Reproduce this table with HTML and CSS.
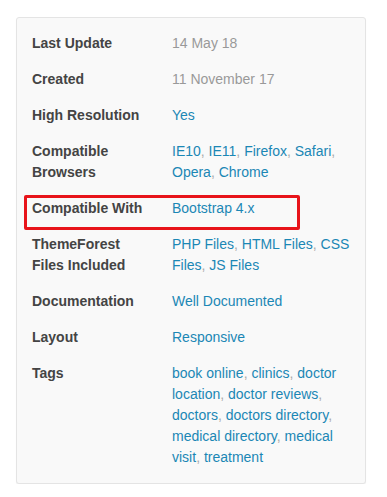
FILE: index.html
```html
<!DOCTYPE html>
<html lang="en">
<head>
  <meta charset="UTF-8" />
  <title>Item Details</title>
  <link rel="stylesheet" href="styles.css">
</head>
<body>

  <div class="meta-card">
    <div class="meta-row">
      <span class="meta-label">Last Update</span>
      <span class="meta-value muted">14 May 18</span>
    </div>
    <div class="meta-row">
      <span class="meta-label">Created</span>
      <span class="meta-value muted">11 November 17</span>
    </div>
    <div class="meta-row">
      <span class="meta-label">High Resolution</span>
      <span class="meta-value"><a href="#">Yes</a></span>
    </div>
    <div class="meta-row">
      <span class="meta-label">Compatible Browsers</span>
      <span class="meta-value"><a href="#">IE10</a>, <a href="#">IE11</a>, <a href="#">Firefox</a>, <a href="#">Safari</a>, <a href="#">Opera</a>, <a href="#">Chrome</a></span>
    </div>
    <div class="meta-row marked">
      <span class="meta-label">Compatible With</span>
      <span class="meta-value"><a href="#">Bootstrap 4.x</a></span>
    </div>
    <div class="meta-row">
      <span class="meta-label">ThemeForest Files Included</span>
      <span class="meta-value"><a href="#">PHP Files</a>, <a href="#">HTML Files</a>, <a href="#">CSS Files</a>, <a href="#">JS Files</a></span>
    </div>
    <div class="meta-row">
      <span class="meta-label">Documentation</span>
      <span class="meta-value"><a href="#">Well Documented</a></span>
    </div>
    <div class="meta-row">
      <span class="meta-label">Layout</span>
      <span class="meta-value"><a href="#">Responsive</a></span>
    </div>
    <div class="meta-row">
      <span class="meta-label">Tags</span>
      <span class="meta-value"><a href="#">book online</a>, <a href="#">clinics</a>, <a href="#">doctor location</a>, <a href="#">doctor reviews</a>, <a href="#">doctors</a>, <a href="#">doctors directory</a>, <a href="#">medical directory</a>, <a href="#">medical visit</a>, <a href="#">treatment</a></span>
    </div>
  </div>

</body>
</html>
```

FILE: styles.css
```css
* {
  box-sizing: border-box;
}

body {
  margin: 0;
  background: #ffffff;
  font-family: 'Liberation Sans', Arial, sans-serif;
  font-size: 14px;
  line-height: 21px;
}

.meta-card {
  width: 350px;
  margin: 17px 0 0 16px;
  padding: 15px 15px 15px 15px;
  background: #f9f9f9;
  border: 1px solid #e4e4e4;
  border-radius: 3px;
  box-shadow: 0 1px 1px rgba(0, 0, 0, 0.06);
  display: flex;
  flex-direction: column;
  gap: 15px;
}

.meta-row {
  position: relative;
  display: flex;
}

.meta-label {
  flex: 0 0 140px;
  padding-right: 20px;
  font-weight: bold;
  color: #444;
}

.meta-value {
  flex: 1;
  color: #aaa;
}

.meta-value.muted {
  color: #999;
}

.meta-value a {
  color: #1b87b5;
  text-decoration: none;
}

/* red frame drawn around the highlighted row */
.meta-row.marked::after {
  content: "";
  position: absolute;
  left: -8px;
  top: -3px;
  width: 270px;
  height: 29px;
  border: 3px solid #e8141a;
  border-radius: 2px;
}
```
